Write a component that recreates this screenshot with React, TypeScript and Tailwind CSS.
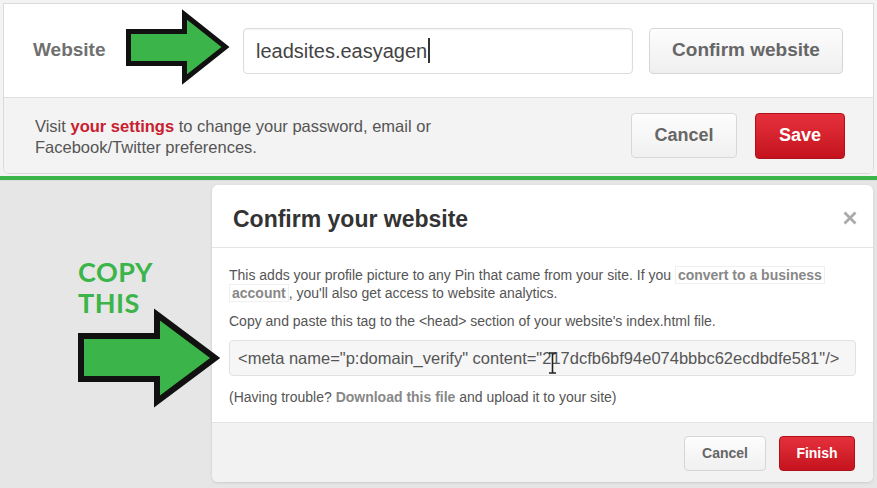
import React from "react";

function Arrow({ w, h, shaftTop, shaftBottom, headX, sw }: { w: number; h: number; shaftTop: number; shaftBottom: number; headX: number; sw: number }) {
  const s = sw / 2;
  const pts = [
    [s, shaftTop + s],
    [headX + s, shaftTop + s],
    [headX + s, s * 2.2],
    [w - s * 2.6, h / 2],
    [headX + s, h - s * 2.2],
    [headX + s, shaftBottom - s],
    [s, shaftBottom - s],
  ]
    .map((p) => p.join(","))
    .join(" ");
  return (
    <svg width={w} height={h} viewBox={`0 0 ${w} ${h}`} className="block overflow-visible">
      <polygon points={pts} fill="#3bb54a" stroke="#111" strokeWidth={sw} strokeLinejoin="miter" strokeMiterlimit={10} />
    </svg>
  );
}

export default function App() {
  return (
    <div className="w-[877px] h-[488px] overflow-hidden flex flex-col bg-[#e6e6e6] font-[family-name:'Liberation_Sans',Arial,sans-serif]">
      {/* Top section */}
      <div className="h-[176px] shrink-0 bg-[#f3f3f3] pt-[3px] pb-[2px] px-[3px] flex flex-col">
        <div className="flex-1 border border-[#dadada] rounded-b-[6px] bg-white flex flex-col overflow-hidden">
          <div className="h-[93px] shrink-0 flex items-center pl-[29px]">
            <div className="w-[93px] text-[19px] font-bold text-[#707070]">Website</div>
            <div className="-mt-[7px]">
              <Arrow w={106} h={76} shaftTop={20} shaftBottom={57} headX={56} sw={5} />
            </div>
            <div className="ml-[11px] w-[390px] h-[46px] border border-[#dcdcdc] rounded-[4px] bg-white flex items-center pl-[12px] shadow-[inset_0_1px_2px_rgba(0,0,0,0.05)]">
              <span className="text-[20px] text-[#444]">leadsites.easyagen</span>
              <span className="ml-[1px] w-[2px] h-[25px] bg-[#333]"></span>
            </div>
            <div className="ml-[16px] w-[194px] h-[46px] border border-[#d6d6d6] rounded-[4px] bg-linear-to-b from-[#fdfdfd] to-[#efefef] flex items-center justify-center text-[19px] font-bold text-[#666]">
              Confirm website
            </div>
          </div>
          <div className="flex-1 border-t border-[#e0e0e0] bg-[#f3f3f3] flex items-center justify-between pl-[31px] pr-[28px]">
            <div className="text-[16.5px] leading-[21px] text-[#555] mt-[2px]">
              Visit <span className="font-bold text-[#c8202f]">your settings</span> to change your password, email or
              <br />
              Facebook/Twitter preferences.
            </div>
            <div className="flex items-center gap-[18px]">
              <div className="w-[106px] h-[45px] border border-[#d8d8d8] rounded-[4px] bg-linear-to-b from-[#fdfdfd] to-[#f0f0f0] flex items-center justify-center text-[18px] font-bold text-[#666]">
                Cancel
              </div>
              <div className="w-[90px] h-[46px] border border-[#b0101a] rounded-[4px] bg-linear-to-b from-[#e5303c] to-[#c5121e] flex items-center justify-center text-[18px] font-bold text-white">
                Save
              </div>
            </div>
          </div>
        </div>
      </div>

      {/* Green divider */}
      <div className="h-[4px] shrink-0 bg-[#3bb44a]"></div>

      {/* Bottom section */}
      <div className="flex-1 flex pt-[4px] pr-[4px] border-t border-[#dddddd]">
        <div className="relative w-[212px] shrink-0">
          <div className="mt-[71px] ml-[78px] font-[family-name:Lato,'Liberation_Sans',sans-serif] font-bold text-[27px] leading-[31px] text-[#3bb44a] tracking-[0.5px]">
            COPY
            <br />
            THIS
          </div>
          <div className="absolute left-[78px] top-[123px] z-10">
            <Arrow w={145} h={100} shaftTop={25} shaftBottom={74} headX={76} sw={6} />
          </div>
        </div>

        <div className="flex-1 h-[297px] bg-white rounded-[6px] shadow-[0_1px_3px_rgba(0,0,0,0.12)] flex flex-col overflow-hidden">
          <div className="h-[63px] shrink-0 border-b border-[#e4e4e4] flex items-center justify-between pl-[21px] pr-[16px] pt-[6px]">
            <div className="text-[23px] font-bold text-[#333]">Confirm your website</div>
            <svg width="14" height="14" viewBox="0 0 14 14" className="-mt-[2px]">
              <path d="M1.5 1.5 L12.5 12.5 M12.5 1.5 L1.5 12.5" stroke="#aaaaaa" strokeWidth="2.8" strokeLinecap="butt" />
            </svg>
          </div>
          <div className="h-[174px] shrink-0 px-[17px] pt-[18px] text-[14px] leading-[18px] text-[#555]">
            <div>
              This adds your profile picture to any Pin that came from your site. If you{" "}
              <span className="font-bold text-[#888] border border-[#efefef] px-[2px] box-decoration-clone">
                convert to a business
                <br />
                account
              </span>
              , you'll also get access to website analytics.
            </div>
            <div className="mt-[10px]">Copy and paste this tag to the &lt;head&gt; section of your website's index.html file.</div>
            <div className="relative mt-[10px] h-[36px] border border-[#e2e2e2] rounded-[4px] bg-[#f6f6f6] flex items-center pl-[8px] text-[16.5px] text-[#555] whitespace-nowrap">
              &lt;meta name="p:domain_verify" content="217dcfb6bf94e074bbbc62ecdbdfe581"/&gt;
              <svg width="9" height="22" viewBox="0 0 9 22" className="absolute left-[318px] top-[11px]">
                <path d="M1 1 H8 M1 21 H8 M4.5 1 V21" stroke="#222" strokeWidth="1.6" fill="none" />
              </svg>
            </div>
            <div className="mt-[12px]">
              (Having trouble? <span className="font-bold text-[#888]">Download this file</span> and upload it to your site)
            </div>
          </div>
          <div className="flex-1 border-t border-[#e2e2e2] bg-[#f2f2f2] flex items-center justify-end pr-[18px] gap-[13px] pt-[2px]">
            <div className="w-[82px] h-[35px] border border-[#d6d6d6] rounded-[4px] bg-linear-to-b from-[#fdfdfd] to-[#f0f0f0] flex items-center justify-center text-[14px] font-bold text-[#666]">
              Cancel
            </div>
            <div className="w-[76px] h-[35px] border border-[#b0101a] rounded-[4px] bg-linear-to-b from-[#e5303c] to-[#c5121e] flex items-center justify-center text-[14px] font-bold text-white">
              Finish
            </div>
          </div>
        </div>
      </div>
    </div>
  );
}
